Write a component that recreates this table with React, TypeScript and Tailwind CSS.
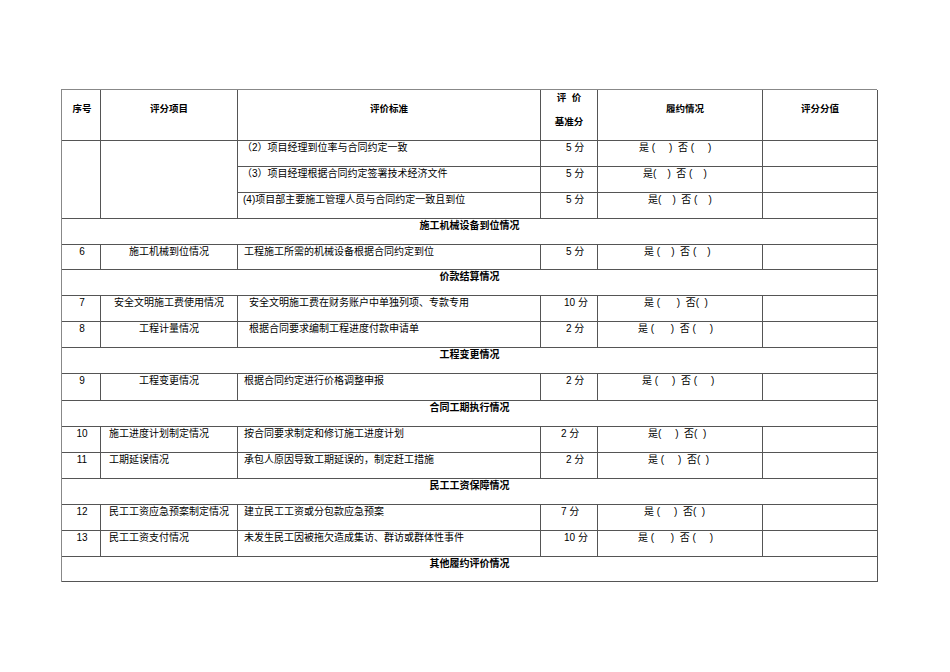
import React from 'react';

const FONT = { fontFamily: '"Liberation Sans", "Noto Sans CJK SC", sans-serif' };

const Section: React.FC<{ title: string }> = ({ title }) => (
  <div className="col-span-6 border-r border-b border-[#555] pt-[1px] text-center text-[10px] leading-[12px] font-bold">
    {title}
  </div>
);

interface ItemProps {
  no: string;
  item: string;
  itemCls: string;
  std: string;
  stdCls: string;
  score: string;
  scoreCls: string;
  ok: string;
  okCls: string;
}

const Item: React.FC<ItemProps> = ({ no, item, itemCls, std, stdCls, score, scoreCls, ok, okCls }) => (
  <>
    <div className="border-r border-b border-[#555] pt-[1px] pl-[2px] text-center">{no}</div>
    <div className={`border-r border-b border-[#555] pt-[1px] ${itemCls}`}>{item}</div>
    <div className={`border-r border-b border-[#555] pt-[1px] ${stdCls}`}>{std}</div>
    <div className={`border-r border-b border-[#555] pt-[1px] whitespace-pre ${scoreCls}`}>{score}</div>
    <div className={`border-r border-b border-[#555] pt-[1px] whitespace-pre ${okCls}`}>{ok}</div>
    <div className="border-r border-b border-[#555]"></div>
  </>
);

const SubRow: React.FC<{ std: string; stdCls: string; ok: string; okCls: string }> = ({ std, stdCls, ok, okCls }) => (
  <>
    <div className={`border-r border-b border-[#555] pt-[1px] ${stdCls}`}>{std}</div>
    <div className="border-r border-b border-[#555] pt-[1px] pl-[25px]">5 分</div>
    <div className={`border-r border-b border-[#555] pt-[1px] whitespace-pre ${okCls}`}>{ok}</div>
    <div className="border-r border-b border-[#555]"></div>
  </>
);

export default function App() {
  return (
    <div className="min-h-[672px] w-[950px] bg-white pt-[89px] pl-[61px] text-black" style={FONT}>
      <div className="grid w-[816px] grid-cols-[39px_137px_303px_57px_165px_115px] grid-rows-[51px_26px_26px_26px_26px_25px_26px_26px_26px_26px_27px_26px_26px_26px_26px_26px_26px_25px] border-t border-l border-[#888] text-[10px] leading-[12px]">
        {/* header */}
        <div className="border-r border-b border-[#555] pt-[13px] pl-[2px] text-center text-[9.5px] font-bold">序号</div>
        <div className="border-r border-b border-[#555] pt-[13px] text-center text-[9.5px] font-bold">评分项目</div>
        <div className="border-r border-b border-[#555] pt-[13px] text-center text-[9.5px] font-bold">评价标准</div>
        <div className="border-r border-b border-[#555] pt-[2px] text-center text-[9.5px] font-bold">
          <div className="whitespace-pre">评  价</div>
          <div className="mt-[12px]">基准分</div>
        </div>
        <div className="border-r border-b border-[#555] pt-[13px] pl-[10px] text-center text-[9.5px] font-bold">履约情况</div>
        <div className="border-r border-b border-[#555] pt-[13px] text-center text-[9.5px] font-bold">评分分值</div>

        {/* items (2)-(4) */}
        <div className="row-span-3 border-r border-b border-[#555]"></div>
        <div className="row-span-3 border-r border-b border-[#555]"></div>
        <SubRow std="（2）项目经理到位率与合同约定一致" stdCls="pl-[4px]" ok="是 (     )  否 (     )" okCls="pl-[41px]" />
        <SubRow std="（3）项目经理根据合同约定签署技术经济文件" stdCls="pl-[4px]" ok="是(    )  否 (    )" okCls="pl-[45px]" />
        <SubRow std="(4)项目部主要施工管理人员与合同约定一致且到位" stdCls="pl-[5px]" ok="是(    )  否 (    )" okCls="pl-[50px]" />

        <Section title="施工机械设备到位情况" />
        <Item no="6" item="施工机械到位情况" itemCls="text-center" std="工程施工所需的机械设备根据合同约定到位" stdCls="pl-[6px]" score="5 分" scoreCls="pl-[25px]" ok="是 (    )  否 (    )" okCls="pl-[46px]" />

        <Section title="价款结算情况" />
        <Item no="7" item="安全文明施工费使用情况" itemCls="text-center" std="安全文明施工费在财务账户中单独列项、专款专用" stdCls="pl-[11px]" score="10 分" scoreCls="pl-[23px]" ok="是 (      )  否(  )" okCls="pl-[46px]" />
        <Item no="8" item="工程计量情况" itemCls="text-center" std="根据合同要求编制工程进度付款申请单" stdCls="pl-[11px]" score="2 分" scoreCls="pl-[25px]" ok="是 (      )  否 (     )" okCls="pl-[40px]" />

        <Section title="工程变更情况" />
        <Item no="9" item="工程变更情况" itemCls="text-center" std="根据合同约定进行价格调整申报" stdCls="pl-[6px]" score="2 分" scoreCls="pl-[25px]" ok="是 (     )  否 (     )" okCls="pl-[44px]" />

        <Section title="合同工期执行情况" />
        <Item no="10" item="施工进度计划制定情况" itemCls="pl-[8px]" std="按合同要求制定和修订施工进度计划" stdCls="pl-[6px]" score="2 分" scoreCls="pl-[20px]" ok="是(     )  否(  )" okCls="pl-[50px]" />
        <Item no="11" item="工期延误情况" itemCls="pl-[8px]" std="承包人原因导致工期延误的，制定赶工措施" stdCls="pl-[6px]" score="2 分" scoreCls="pl-[25px]" ok="是 (     )  否(  )" okCls="pl-[50px]" />

        <Section title="民工工资保障情况" />
        <Item no="12" item="民工工资应急预案制定情况" itemCls="pl-[8px]" std="建立民工工资或分包款应急预案" stdCls="pl-[6px]" score="7 分" scoreCls="pl-[20px]" ok="是 (     )  否(  )" okCls="pl-[46px]" />
        <Item no="13" item="民工工资支付情况" itemCls="pl-[8px]" std="未发生民工因被拖欠造成集访、群访或群体性事件" stdCls="pl-[6px]" score="10 分" scoreCls="pl-[23px]" ok="是 (      )  否 (     )" okCls="pl-[40px]" />

        <Section title="其他履约评价情况" />
      </div>
    </div>
  );
}
